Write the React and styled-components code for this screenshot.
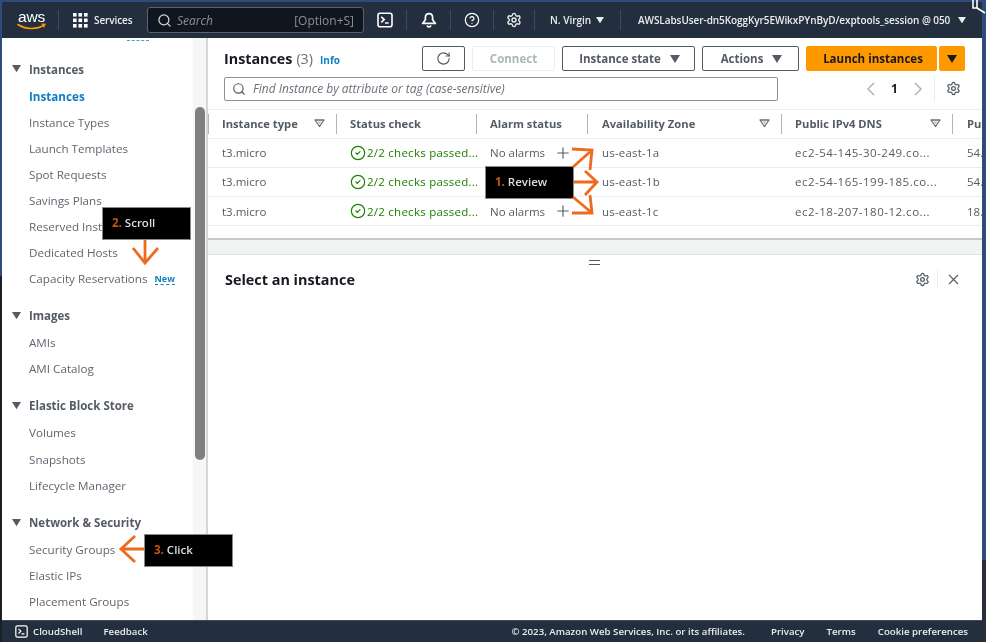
import React from 'react';
import styled, { createGlobalStyle } from 'styled-components';
import { Search, RotateCw, X, Plus, CircleCheck, Settings, CircleHelp } from 'lucide-react';

const Global = createGlobalStyle`
  html, body { margin: 0; padding: 0; overflow: hidden; background: #232f3e; }
  * { box-sizing: border-box; }
  #root { width: 986px; height: 642px; }
`;

const Page = styled.div`
  position: relative;
  width: 986px;
  height: 642px;
  padding: 2px 4px 0 2px;
  display: grid;
  grid-template-columns: 980px;
  grid-template-rows: 36px 582px 22px;
  font-family: "Open Sans", "Liberation Sans", sans-serif;
  font-size: 12px;
  color: #16191f;
  overflow: hidden;
  filter: blur(0.45px);
  background:
    linear-gradient(#2e4b79 0 276px, #1b1e24 276px) left / 50% 100% no-repeat,
    linear-gradient(#2e4b79 0 560px, #2a2e36 560px) right / 50% 100% no-repeat;
`;

/* ---------- top bar ---------- */
const TopBar = styled.header`
  background: #232f3e;
  display: flex;
  align-items: center;
  color: #fff;
`;
const NavCell = styled.div`
  width: ${p => p.$w}px;
  height: 20px;
  flex: none;
  display: flex;
  align-items: center;
  justify-content: ${p => p.$start ? 'flex-start' : 'center'};
  padding-left: ${p => p.$pad || 0}px;
  gap: ${p => p.$gap || 0}px;
  border-left: ${p => p.$plain ? 'none' : '1px solid #414b58'};
  font-size: 10px;
  letter-spacing: ${p => p.$ls || 0}px;
  font-weight: 600;
  white-space: nowrap;
  color: #eaeded;
`;
const LogoWrap = styled.div`
  position: relative;
  width: 29px;
  height: 24px;
  line-height: 1;
`;
const LogoText = styled.span`
  display: block;
  font-family: "Liberation Sans", sans-serif;
  font-size: 15.5px;
  font-weight: 400;
  letter-spacing: -0.2px;
  color: #fff;
  text-align: center;
  margin-top: 1px;
`;
const Smile = styled.svg`
  position: absolute;
  left: 0;
  top: 15px;
`;
const SearchBox = styled.div`
  width: 217px;
  height: 26px;
  flex: none;
  margin-left: 9px;
  background: #10161f;
  border: 1px solid #5a626d;
  border-radius: 3px;
  display: flex;
  align-items: center;
  padding: 0 9px;
  color: #d5dbdb;
`;
const SearchHint = styled.span`
  font-style: italic;
  font-size: 12px;
  color: #879196;
  margin-left: 5px;
  flex: 1;
`;
const SearchKey = styled.span`
  font-size: 12px;
  color: #879196;
`;
const Cursor = styled.svg`
  position: absolute;
  top: 0;
  right: 0;
`;

/* ---------- body ---------- */
const Body = styled.div`
  display: flex;
  min-height: 0;
  min-width: 0;
  background: #fff;
`;
const Sidebar = styled.nav`
  width: 191px;
  flex: none;
  position: relative;
  padding: 20px 0 0 10px;
  overflow: hidden;
  background: #fff;
`;
const Dashes = styled.div`
  position: absolute;
  top: 2px;
  left: 125px;
  width: 22px;
  border-top: 1px dashed #3f9fdc;
`;
const NavGroup = styled.section`
  margin-bottom: 13px;
`;
const GroupHead = styled.div`
  height: 22px;
  margin-bottom: 3px;
  display: flex;
  align-items: center;
  gap: 8px;
  font-weight: 700;
  color: #545b64;
  font-size: 11.5px;
`;
const NavLink = styled.div`
  height: 26.1px;
  display: flex;
  align-items: center;
  gap: 7px;
  padding-left: 17px;
  white-space: nowrap;
  font-size: 11.65px;
  font-weight: ${p => p.$active ? 700 : 400};
  color: ${p => p.$active ? '#0f7fc4' : '#5f666f'};
`;
const NewTag = styled.span`
  font-size: 9px;
  font-weight: 700;
  color: #0f7fc4;
  border-bottom: 1px dashed #0f7fc4;
  line-height: 10px;
  margin-top: 2px;
`;
const ScrollTrack = styled.div`
  width: 15px;
  flex: none;
  padding: 69px 1px 0 2px;
  background: #f6f6f6;
  border-right: 2px solid #d3d7d7;
`;
const ScrollThumb = styled.div`
  width: 10px;
  height: 353px;
  border-radius: 5px;
  background: #808080;
`;
const Main = styled.main`
  flex: 1;
  min-width: 0;
  display: flex;
  flex-direction: column;
  background: #fff;
`;
const ListPanel = styled.div`
  height: 202px;
  flex: none;
  border-bottom: 2px solid #c4caca;
  overflow: hidden;
`;
const Toolbar = styled.div`
  height: 25px;
  margin-top: 8px;
  padding: 0 17px 0 16px;
  display: flex;
  align-items: center;
`;
const Title = styled.h1`
  margin: 0;
  flex: 1;
  font-size: 14.3px;
  font-weight: 700;
  color: #16191f;
  display: flex;
  align-items: baseline;
  gap: 4px;
`;
const Count = styled.span`
  font-weight: 400;
  color: #687078;
`;
const InfoLink = styled.span`
  font-size: 10px;
  font-weight: 700;
  color: #0f7fc4;
  margin-left: 3px;
`;
const Btn = styled.div`
  width: ${p => p.$w}px;
  height: 25px;
  flex: none;
  margin-left: ${p => p.$ml ?? 7}px;
  padding-left: ${p => p.$pl || 0}px;
  display: flex;
  align-items: center;
  justify-content: center;
  gap: ${p => p.$gap || 0}px;
  border-radius: 2px;
  border: 1px solid ${p => p.$disabled ? '#eaeded' : p.$primary ? '#ff9900' : '#545b64'};
  background: ${p => p.$primary ? '#ff9900' : '#fff'};
  color: ${p => p.$disabled ? '#aab7b8' : p.$primary ? '#16191f' : '#545b64'};
  font-weight: 700;
  font-size: 11.5px;
  white-space: nowrap;
`;
const FilterRow = styled.div`
  height: 25px;
  margin-top: 5px;
  padding-left: 16px;
  padding-right: 19px;
  display: flex;
  align-items: center;
`;
const FilterBox = styled.div`
  width: 554px;
  height: 24px;
  border: 1px solid #879596;
  border-radius: 2px;
  display: flex;
  align-items: center;
  gap: 7px;
  padding-left: 7px;
  color: #545b64;
`;
const FilterHint = styled.span`
  font-style: italic;
  font-size: 12px;
  color: #687078;
`;
const Pager = styled.div`
  margin-left: auto;
  display: flex;
  align-items: center;
  color: #16191f;
  font-weight: 700;
`;
const PagerNum = styled.span`
  width: 37px;
  text-align: center;
  font-size: 12px;
  color: #16191f;
`;
const PagerGear = styled.div`
  margin-left: 11px;
  padding: 0 2px 0 11px;
  height: 25px;
  border-left: 1px solid #eaeded;
  display: flex;
  align-items: center;
  color: #545b64;
`;
const TableWrap = styled.div`
  margin-top: 8px;
  border-top: 1px solid #eaeded;
`;
const TRow = styled.div`
  display: grid;
  grid-template-columns: 128px 140px 111px 194px 171px 40px;
  height: ${p => p.$head ? 28.5 : 29.33}px;
  align-items: center;
  border-bottom: 1px solid #eaeded;
  color: #545b64;
  white-space: nowrap;
`;
const THead = styled.div`
  height: 20px;
  padding: 0 11.5px 0 ${p => p.$pad || 13}px;
  display: flex;
  align-items: center;
  justify-content: space-between;
  border-left: 1px solid #aab7b8;
  font-weight: 700;
  font-size: 11.2px;
  color: #545b64;
  overflow: hidden;
`;
const TCell = styled.div`
  padding-left: ${p => p.$pad || 14}px;
  display: flex;
  align-items: center;
  gap: ${p => p.$gap || 0}px;
  font-size: 11.5px;
  letter-spacing: ${p => p.$ls || 0}px;
  color: #545b64;
  min-width: 0;
  & > svg { flex: none; }
`;
const Status = styled.span`
  color: #1d8102;
  white-space: nowrap;
  letter-spacing: 0.25px;
`;
const Band = styled.div`
  height: 15px;
  flex: none;
  background: #f2f3f3;
  border-bottom: 1px solid #dfe3e3;
`;
const DetailPanel = styled.div`
  flex: 1;
  position: relative;
  padding: 14px 20px 0 17px;
  background: #fff;
`;
const DetailHead = styled.div`
  display: flex;
  align-items: center;
  height: 20px;
`;
const DetailTitle = styled.h2`
  margin: 0;
  flex: 1;
  font-size: 14.4px;
  font-weight: 700;
  color: #16191f;
`;
const DetailIcons = styled.div`
  display: flex;
  align-items: center;
  color: #545b64;
`;
const IconDiv = styled.div`
  width: 1px;
  height: 20px;
  background: #eaeded;
  margin: 0 7px;
`;
const Handle = styled.div`
  position: absolute;
  top: 5px;
  left: 381px;
  width: 11px;
  height: 5px;
  border-top: 1.5px solid #545b64;
  border-bottom: 1.5px solid #545b64;
`;

/* ---------- footer ---------- */
const Footer = styled.footer`
  background: #232f3e;
  border-top: 1px solid #414b58;
  display: flex;
  align-items: center;
  padding: 0 14px 0 13px;
  color: #eaeded;
  font-size: 9.7px;
  font-weight: 600;
  white-space: nowrap;
`;
const FootShell = styled.div`
  display: flex;
  align-items: center;
  gap: 5px;
  margin-right: 21px;
`;
const FootRight = styled.div`
  margin-left: auto;
  display: flex;
  align-items: center;
  gap: 22px;
`;
const Copy = styled.span`
  margin-right: 4px;
`;

/* ---------- overlays ---------- */
const Callout = styled.div`
  position: absolute;
  left: ${p => p.$x}px;
  top: ${p => p.$y}px;
  width: 89px;
  height: 33px;
  padding: 0 0 3px 9px;
  background: #000;
  border: 1px solid #8a8a8a;
  display: flex;
  align-items: center;
  gap: 3px;
  font-size: 11.5px;
  font-weight: 600;
  color: #dedede;
`;
const Step = styled.span`
  color: #c4560f;
  font-weight: 700;
`;
const Arrows = styled.svg`
  position: absolute;
  left: 0;
  top: 0;
  pointer-events: none;
`;

const Caret = ({ size = 9, color = 'currentColor' }) => (
  <svg width={size} height={size * 0.8} viewBox="0 0 10 8"><path d="M0 0h10L5 8z" fill={color} /></svg>
);
const SortIcon = () => (
  <svg width="11" height="9" viewBox="0 0 11 9" fill="none"><path d="M1 1h9L5.5 7.5z" stroke="#687078" strokeWidth="1.3" strokeLinejoin="round" /><path d="M3.8 2.6h3.4L5.5 5z" fill="#b0b6b8" /></svg>
);
const GridIcon = () => (
  <svg width="15" height="15" viewBox="0 0 15 15" fill="#fff">
    {[0, 5.5, 11].flatMap(y => [0, 5.5, 11].map(x => <rect key={`${x}-${y}`} x={x} y={y} width="3.6" height="3.6" />))}
  </svg>
);
const ShellIcon = ({ size = 16, w = 1.6 }) => (
  <svg width={size} height={size} viewBox="0 0 16 16" fill="none" stroke="#fff" strokeWidth={w}>
    <rect x="1" y="1.2" width="14" height="13.6" rx="2" />
    <path d="M4.3 4.8 7.2 7.6 4.3 10.4M8 11h3.6" />
  </svg>
);
const BellIcon = () => (
  <svg width="16" height="16" viewBox="0 0 16 16" fill="none" stroke="#fff" strokeWidth="1.7" strokeLinejoin="round">
    <path d="M8 1.6c-2.4 0-3.6 1.8-3.6 4v2.2L1.6 11.4h12.8l-2.8-3.6V5.6c0-2.2-1.2-4-3.6-4z" />
    <path d="M6 13.4c.3 1 1 1.4 2 1.4s1.7-.4 2-1.4" />
  </svg>
);
const PageChevron = ({ flip }) => (
  <svg width="10" height="14" viewBox="0 0 10 14" fill="none" stroke="#aab7b8" strokeWidth="1.5">
    <path d={flip ? 'M2 1l6 6-6 6' : 'M8 1L2 7l6 6'} />
  </svg>
);

const groups = [
  { title: 'Instances', items: ['Instances', 'Instance Types', 'Launch Templates', 'Spot Requests', 'Savings Plans', 'Reserved Instances', 'Dedicated Hosts', 'Capacity Reservations'] },
  { title: 'Images', items: ['AMIs', 'AMI Catalog'] },
  { title: 'Elastic Block Store', items: ['Volumes', 'Snapshots', 'Lifecycle Manager'] },
  { title: 'Network & Security', items: ['Security Groups', 'Elastic IPs', 'Placement Groups'] },
];

const rows = [
  { zone: 'us-east-1a', dns: 'ec2-54-145-30-249.co...', ip: '54.' },
  { zone: 'us-east-1b', dns: 'ec2-54-165-199-185.co...', ip: '54.' },
  { zone: 'us-east-1c', dns: 'ec2-18-207-180-12.co...', ip: '18.' },
];

function PagerChevrons() {
  return (
    <>
      <PageChevron />
      <PagerNum>1</PagerNum>
      <PageChevron flip />
    </>
  );
}

export default function App() {
  return (
    <>
      <Global />
      <Page>
        <TopBar>
          <NavCell $w={56} $plain $start $pad={15}>
            <LogoWrap>
              <LogoText>aws</LogoText>
              <Smile width="29" height="8" viewBox="0 0 29 8" fill="none">
                <path d="M1 1.5C8 6.5 20 6.8 27 2" stroke="#ff9900" strokeWidth="1.6" strokeLinecap="round" />
                <path d="M24.5 1.2 28 1.4 26.6 4.6" stroke="#ff9900" strokeWidth="1.2" />
              </Smile>
            </LogoWrap>
          </NavCell>
          <NavCell $w={80} $start $pad={14} $gap={6} $ls={-0.1}><GridIcon />Services</NavCell>
          <SearchBox>
            <Search size={15} strokeWidth={2} color="#d5dbdb" />
            <SearchHint>Search</SearchHint>
            <SearchKey>[Option+S]</SearchKey>
          </SearchBox>
          <NavCell $w={42} $plain><ShellIcon /></NavCell>
          <NavCell $w={44}><BellIcon /></NavCell>
          <NavCell $w={43}><CircleHelp size={16} strokeWidth={1.8} color="#fff" /></NavCell>
          <NavCell $w={41}><Settings size={16} strokeWidth={2.1} color="#eaeded" /></NavCell>
          <NavCell $w={86} $start $pad={15} $gap={5}>N. Virgin <Caret size={8} /></NavCell>
          <NavCell $w={362} $start $pad={17} $gap={8} $ls={-0.07}>AWSLabsUser-dn5KoggKyr5EWikxPYnByD/exptools_session @ 050 <Caret size={8} /></NavCell>
        </TopBar>

        <Body>
          <Sidebar>
            <Dashes />
            {groups.map((g, i) => (
              <NavGroup key={g.title}>
                <GroupHead><Caret size={9} color="#545b64" />{g.title}</GroupHead>
                {g.items.map((item, j) => (
                  <NavLink key={item} $active={i === 0 && j === 0}>
                    {item}
                    {item === 'Capacity Reservations' && <NewTag>New</NewTag>}
                  </NavLink>
                ))}
              </NavGroup>
            ))}
          </Sidebar>
          <ScrollTrack><ScrollThumb /></ScrollTrack>

          <Main>
            <ListPanel>
              <Toolbar>
                <Title>Instances <Count>(3)</Count><InfoLink>Info</InfoLink></Title>
                <Btn $w={43}><RotateCw size={15} strokeWidth={1.8} color="#545b64" /></Btn>
                <Btn $w={83} $disabled>Connect</Btn>
                <Btn $w={133} $gap={9} $pl={2}>Instance state <Caret size={10} /></Btn>
                <Btn $w={97} $gap={9} $pl={2}>Actions <Caret size={10} /></Btn>
                <Btn $w={131} $pl={3} $primary>Launch instances</Btn>
                <Btn $w={26} $ml={2} $primary><Caret size={10} /></Btn>
              </Toolbar>
              <FilterRow>
                <FilterBox>
                  <Search size={14} strokeWidth={2} />
                  <FilterHint>Find Instance by attribute or tag (case-sensitive)</FilterHint>
                </FilterBox>
                <Pager>
                  <PagerChevrons />
                  <PagerGear><Settings size={15} strokeWidth={2} /></PagerGear>
                </Pager>
              </FilterRow>
              <TableWrap>
                <TRow $head>
                  <THead>Instance type <SortIcon /></THead>
                  <THead>Status check</THead>
                  <THead>Alarm status</THead>
                  <THead $pad={14}>Availability Zone <SortIcon /></THead>
                  <THead>Public IPv4 DNS <SortIcon /></THead>
                  <THead $pad={14}>Public</THead>
                </TRow>
                {rows.map(r => (
                  <TRow key={r.zone}>
                    <TCell>t3.micro</TCell>
                    <TCell $gap={1}>
                      <CircleCheck size={16} strokeWidth={1.8} color="#1d8102" />
                      <Status>2/2 checks passed...</Status>
                    </TCell>
                    <TCell $gap={9}>No alarms <Plus size={18} strokeWidth={1.5} /></TCell>
                    <TCell $pad={15} $ls={0.2}>{r.zone}</TCell>
                    <TCell $ls={0.5}>{r.dns}</TCell>
                    <TCell $pad={15}>{r.ip}</TCell>
                  </TRow>
                ))}
              </TableWrap>
            </ListPanel>
            <Band />
            <DetailPanel>
              <Handle />
              <DetailHead>
                <DetailTitle>Select an instance</DetailTitle>
                <DetailIcons>
                  <Settings size={15} strokeWidth={2} />
                  <IconDiv />
                  <X size={17} strokeWidth={1.5} />
                </DetailIcons>
              </DetailHead>
            </DetailPanel>
          </Main>
        </Body>

        <Footer>
          <FootShell><ShellIcon size={13} w={1.5} />CloudShell</FootShell>
          <span>Feedback</span>
          <FootRight>
            <Copy>© 2023, Amazon Web Services, Inc. or its affiliates.</Copy>
            <span>Privacy</span>
            <span>Terms</span>
            <span>Cookie preferences</span>
          </FootRight>
        </Footer>

        <Cursor width="14" height="15" viewBox="0 0 14 15" fill="none">
          <path d="M1 0v8h4V0M5 8l8 5" stroke="#fff" strokeWidth="1.6" />
        </Cursor>

        <Callout $x={485} $y={166}><Step>1.</Step> Review</Callout>
        <Callout $x={102} $y={207}><Step>2.</Step> Scroll</Callout>
        <Callout $x={144} $y={534}><Step>3.</Step> Click</Callout>

        <Arrows width="986" height="642" viewBox="0 0 986 642" fill="none" stroke="#ee6a1f" strokeWidth="2.8">
          <path d="M572 149 592 150 590 170M592 150 573 167" />
          <path d="M574 182H597M585 171 597 182 585 195" />
          <path d="M573 197 592 213M590 195 592 213 572 213" />
          <path d="M145 240V263M133 248 145 263 158 248" />
          <path d="M144 549H121M135 536 121 549 135 562" />
        </Arrows>
      </Page>
    </>
  );
}
